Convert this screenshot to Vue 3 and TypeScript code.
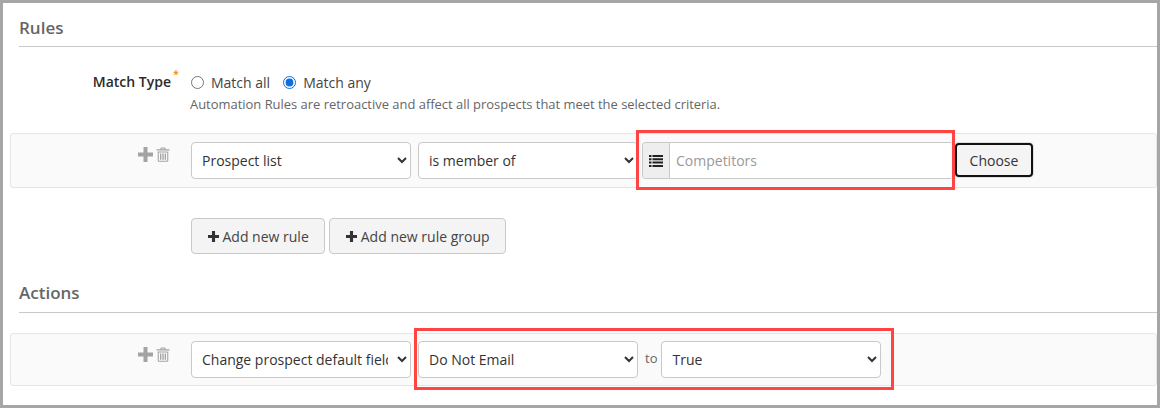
<script setup lang="ts">
const ruleFields: string[] = ['Prospect list']
const ruleOps: string[] = ['is member of']
</script>

<template>
  <div class="frame">
    <section class="rules">
      <h2 class="heading">Rules</h2>
      <div class="match">
        <div class="match-label">Match Type<span class="star">*</span></div>
        <div class="match-body">
          <div class="radios">
            <label class="radio"><input type="radio" name="match" />Match all</label>
            <label class="radio"><input type="radio" name="match" checked />Match any</label>
          </div>
          <p class="help">Automation Rules are retroactive and affect all prospects that meet the selected criteria.</p>
        </div>
      </div>

      <div class="row row-rule">
        <div class="tools">
          <svg class="plus" viewBox="0 0 15 15" width="15" height="15"><path d="M5.500 0h4v5.500h5.500v4H9.500V15h-4V9.500H0v-4h5.500z" /></svg>
          <svg class="trash" viewBox="0 0 14 15" width="14" height="15"><path d="M5 .5h4l.8 1.800H13.500v1.200H.5V2.300h3.700zM5.800 1.500l-.3.800h3l-.3-.8zM1.700 4.500h10.600v9a1.300 1.300 0 0 1-1.300 1.300H3a1.300 1.300 0 0 1-1.300-1.300zm1.100 1v8.300h8.400V5.500zm1.200 1h1.300v6.200H4zm2.300 0h1.400v6.200H6.300zm2.400 0H10v6.200H8.700z" /></svg>
        </div>
        <select class="sel"><option v-for="f in ruleFields" :key="f">{{ f }}</option></select>
        <select class="sel"><option v-for="o in ruleOps" :key="o">{{ o }}</option></select>
        <div class="group">
          <span class="addon">
            <svg viewBox="0 0 14 12" width="14" height="12"><path d="M0 0h2.500v2H0zm3.500 0H14v2H3.500zM0 3.300h2.500v2H0zm3.500 0H14v2H3.500zM0 6.600h2.500v2H0zm3.500 0H14v2H3.500zM0 9.900h2.500v2H0zm3.500 0H14v2H3.500z" /></svg>
          </span>
          <input class="text" placeholder="Competitors" />
        </div>
        <button class="choose" type="button">Choose</button>
        <span class="mark mark-rule"></span>
      </div>

      <div class="adds">
        <button class="add" type="button"><svg viewBox="0 0 12 12" width="11" height="11"><path d="M4.300 0h3.400v4.300H12v3.400H7.700V12H4.300V7.700H0V4.300h4.300z" /></svg>Add new rule</button>
        <button class="add" type="button"><svg viewBox="0 0 12 12" width="11" height="11"><path d="M4.300 0h3.400v4.300H12v3.400H7.700V12H4.300V7.700H0V4.300h4.300z" /></svg>Add new rule group</button>
      </div>
    </section>

    <section class="actions">
      <h2 class="heading heading-actions">Actions</h2>
      <div class="row row-action">
        <div class="tools">
          <svg class="plus" viewBox="0 0 15 15" width="15" height="15"><path d="M5.500 0h4v5.500h5.500v4H9.500V15h-4V9.500H0v-4h5.500z" /></svg>
          <svg class="trash" viewBox="0 0 14 15" width="14" height="15"><path d="M5 .5h4l.8 1.800H13.500v1.200H.5V2.300h3.700zM5.800 1.500l-.3.800h3l-.3-.8zM1.700 4.500h10.600v9a1.300 1.300 0 0 1-1.300 1.300H3a1.300 1.300 0 0 1-1.300-1.300zm1.100 1v8.300h8.400V5.500zm1.200 1h1.300v6.200H4zm2.300 0h1.400v6.200H6.300zm2.400 0H10v6.200H8.700z" /></svg>
        </div>
        <select class="sel"><option>Change prospect default field</option></select>
        <select class="sel"><option>Do Not Email</option></select>
        <span class="to">to</span>
        <select class="sel"><option>True</option></select>
        <span class="mark mark-action"></span>
      </div>
    </section>
  </div>
</template>

<style>
html, body { margin: 0; background: #fff; }
</style>

<style scoped>
.frame {
  box-sizing: border-box;
  width: 1160px;
  height: 408px;
  border-style: solid;
  border-color: #a6a6a6;
  border-width: 3px;
  padding: 0 0 0 7px;
  overflow: hidden;
  background: #fff;
  font-family: "Open Sans", "Noto Sans", sans-serif;
  font-size: 14px;
  color: #333;
}
.heading {
  margin: 0 0 0 9px;
  height: 44px;
  box-sizing: border-box;
  padding-top: 14px;
  font-size: 17px;
  line-height: 22px;
  font-weight: 600;
  color: #666;
  border-bottom: 1px solid #c9c9c9;
}
.heading-actions { height: 45px; }
.match { display: flex; margin-top: 22px; height: 64px; }
.match-label {
  width: 161px;
  text-align: right;
  font-weight: 600;
  line-height: 26px;
  color: #2b2b2b;
  position: relative;
  padding-right: 9px;
}
.star { position: absolute; right: 1px; top: -3px; color: #f08a00; font-size: 11px; line-height: 16px; }
.match-body { margin-left: 3px; padding-left: 7px; }
.radios { display: flex; gap: 14px; height: 26px; align-items: center; padding-left: 1px; }
.radio { display: flex; align-items: center; gap: 7px; color: #444; }
.radio + .radio { margin-left: -1px; }
.radio input { margin: 0; width: 13px; height: 13px; accent-color: #0b6fe0; }
.help { margin: 0; font-size: 12.950px; line-height: 18px; color: #666; }
.row {
  position: relative;
  display: flex;
  align-items: flex-start;
  gap: 7px;
  box-sizing: border-box;
  background: #fafafa;
  border: 1px solid #e5e5e5;
  border-radius: 3px;
  padding-left: 180px;
}
.row-rule { height: 55px; padding-top: 8px; }
.row-action { height: 53px; padding-top: 7px; margin-top: 20px; }
.tools { position: absolute; left: 127px; top: 13px; display: flex; align-items: center; gap: 3px; }
.plus { fill: #a3a3a3; }
.trash { fill: #a3a3a3; }
.sel {
  box-sizing: border-box;
  width: 220px;
  height: 37px;
  padding: 0 6px;
  border: 1px solid #c9c9c9;
  border-radius: 4px;
  background-color: #fff;
  color: #333;
  font-family: inherit;
  font-size: 14px;
}
.group { display: flex; height: 37px; width: 309px; margin-left: -3px; box-sizing: border-box; border: 1px solid #c9c9c9; border-right: 0; border-radius: 4px 0 0 4px; background: #fff; }
.addon { width: 26px; display: flex; align-items: center; justify-content: center; background: #eee; border-right: 1px solid #c9c9c9; border-radius: 3px 0 0 3px; }
.addon svg { fill: #222; }
.text { flex: 1; min-width: 0; border: 0; outline: 0; padding: 0 6px; background: transparent; font-family: inherit; font-size: 14px; }
.text::placeholder { color: #999; opacity: 1; }
.choose {
  box-sizing: border-box;
  width: 78px;
  height: 34px;
  margin: 1px 0 0 -3px;
  background: #f4f4f4;
  border: 2px solid #111;
  border-radius: 4px;
  box-shadow: 0 0 0 1px #ddd;
  font-family: inherit;
  font-size: 14px;
  color: #333;
  padding: 0;
}
.mark { position: absolute; box-sizing: border-box; border: 3px solid #ff4444; pointer-events: none; }
.mark-rule { left: 625px; top: -4px; width: 319px; height: 60px; }
.mark-action { left: 403px; top: -6px; width: 480px; height: 62px; }
.adds { display: flex; gap: 4px; margin: 30px 0 0 181px; }
.add {
  display: flex;
  align-items: center;
  justify-content: center;
  gap: 4px;
  box-sizing: border-box;
  height: 36px;
  padding: 0 15.500px;
  background: #f4f4f4;
  border: 1px solid #c9c9c9;
  border-radius: 4px;
  font-family: inherit;
  font-size: 14px;
  color: #444;
}
.add svg { fill: #333; }
.to { margin: 0 -3px 0 0; line-height: 34px; color: #666; font-size: 13px; }
.actions { margin-top: 14px; }
</style>
